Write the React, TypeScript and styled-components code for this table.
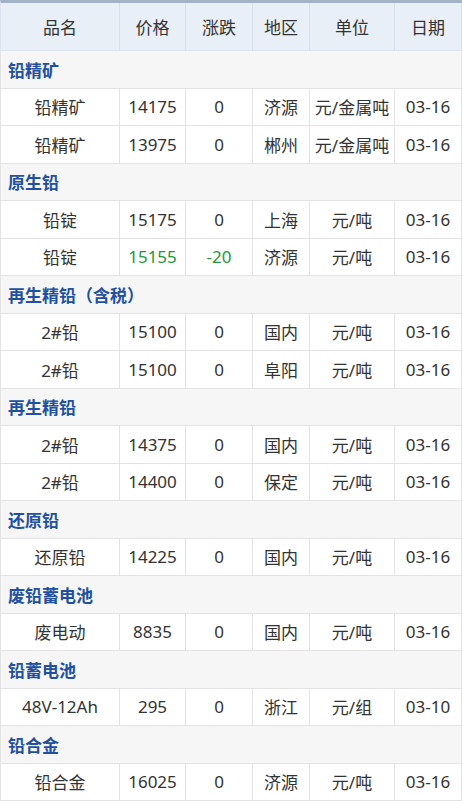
import React from "react";
import styled, { createGlobalStyle } from "styled-components";

type Item = {
  name: string;
  price: string;
  change: string;
  area: string;
  unit: string;
  date: string;
};

type Group = { title: string; items: Item[] };

const groups: Group[] = [
  {
    title: "铅精矿",
    items: [
      { name: "铅精矿", price: "14175", change: "0", area: "济源", unit: "元/金属吨", date: "03-16" },
      { name: "铅精矿", price: "13975", change: "0", area: "郴州", unit: "元/金属吨", date: "03-16" },
    ],
  },
  {
    title: "原生铅",
    items: [
      { name: "铅锭", price: "15175", change: "0", area: "上海", unit: "元/吨", date: "03-16" },
      { name: "铅锭", price: "15155", change: "-20", area: "济源", unit: "元/吨", date: "03-16" },
    ],
  },
  {
    title: "再生精铅（含税）",
    items: [
      { name: "2#铅", price: "15100", change: "0", area: "国内", unit: "元/吨", date: "03-16" },
      { name: "2#铅", price: "15100", change: "0", area: "阜阳", unit: "元/吨", date: "03-16" },
    ],
  },
  {
    title: "再生精铅",
    items: [
      { name: "2#铅", price: "14375", change: "0", area: "国内", unit: "元/吨", date: "03-16" },
      { name: "2#铅", price: "14400", change: "0", area: "保定", unit: "元/吨", date: "03-16" },
    ],
  },
  {
    title: "还原铅",
    items: [{ name: "还原铅", price: "14225", change: "0", area: "国内", unit: "元/吨", date: "03-16" }],
  },
  {
    title: "废铅蓄电池",
    items: [{ name: "废电动", price: "8835", change: "0", area: "国内", unit: "元/吨", date: "03-16" }],
  },
  {
    title: "铅蓄电池",
    items: [{ name: "48V-12Ah", price: "295", change: "0", area: "浙江", unit: "元/组", date: "03-10" }],
  },
  {
    title: "铅合金",
    items: [{ name: "铅合金", price: "16025", change: "0", area: "济源", unit: "元/吨", date: "03-16" }],
  },
];

const GlobalStyle = createGlobalStyle`
  body {
    margin: 0;
    background: #fff;
    font-family: "Noto Sans", "Noto Sans CJK SC", sans-serif;
  }
`;

const Table = styled.div`
  width: 462px;
  color: #333;
  font-size: 17px;
`;

const columns = "119px 66px 67px 57px 85px 67px";

const HeadRow = styled.div`
  display: grid;
  grid-template-columns: ${columns};
  height: 51px;
  box-sizing: border-box;
  border-top: 3px solid #a3b3c6;
  border-left: 1px solid #dbe3ee;
  border-bottom: 1px solid #dde4ee;
  background: #e9eff7;
`;

const HeadCell = styled.div`
  display: flex;
  align-items: center;
  justify-content: center;
  border-right: 1px solid #d6dfea;
  color: #333;
`;

const GroupRow = styled.div`
  display: flex;
  align-items: center;
  height: 37.5px;
  box-sizing: border-box;
  padding-left: 7px;
  border-left: 1px solid #e3e3e3;
  border-right: 1px solid #e3e3e3;
  border-bottom: 1px solid #e3e3e3;
  background: #f6f6f6;
  color: #22509f;
  font-weight: 700;
`;

const DataRow = styled.div`
  display: grid;
  grid-template-columns: ${columns};
  height: 37.5px;
  box-sizing: border-box;
  border-left: 1px solid #e3e3e3;
  border-bottom: 1px solid #e3e3e3;
  background: #fff;
`;

const Cell = styled.div<{ $down?: boolean }>`
  display: flex;
  align-items: center;
  justify-content: center;
  white-space: nowrap;
  border-right: 1px solid #e3e3e3;
  color: ${(p) => (p.$down ? "#23973a" : "#333")};
`;

const headers = ["品名", "价格", "涨跌", "地区", "单位", "日期"];

const App: React.FC = () => {
  return (
    <>
      <GlobalStyle />
      <Table>
        <HeadRow>
          {headers.map((h) => (
            <HeadCell key={h}>{h}</HeadCell>
          ))}
        </HeadRow>
        {groups.map((group) => (
          <React.Fragment key={group.title}>
            <GroupRow>{group.title}</GroupRow>
            {group.items.map((item, i) => {
              const down = item.change.startsWith("-");
              return (
                <DataRow key={i}>
                  <Cell>{item.name}</Cell>
                  <Cell $down={down}>{item.price}</Cell>
                  <Cell $down={down}>{item.change}</Cell>
                  <Cell>{item.area}</Cell>
                  <Cell>{item.unit}</Cell>
                  <Cell>{item.date}</Cell>
                </DataRow>
              );
            })}
          </React.Fragment>
        ))}
      </Table>
    </>
  );
};

export default App;
